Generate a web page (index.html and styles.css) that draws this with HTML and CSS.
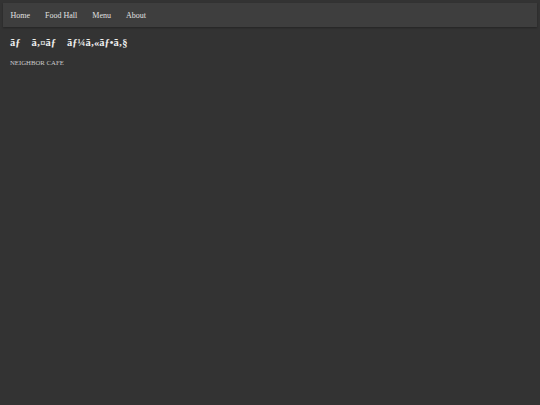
FILE: index.html
```html
<!DOCTYPE html>
<html lang="ja">
<head>
  <meta charset="UTF-8" />
  <meta name="viewport" content="width=device-width, initial-scale=1.0"/>
  <title>Neighbor Cafe</title>
  <link rel="stylesheet" href="styles.css">
</head>
<body>

  <nav class="nav-bar">
    <a href="#" class="nav-link">Home</a>
    <a href="#" class="nav-link">Food Hall</a>
    <a href="#" class="nav-link">Menu</a>
    <a href="#" class="nav-link">About</a>
  </nav>

  <header class="shop-header">
    <h1 class="shop-title">ãƒ<span class="ctrl">&#x8D;</span>ã‚¤ãƒ<span class="ctrl">&#x90;</span>ãƒ¼ã‚«ãƒ•ã‚§</h1>
    <p class="shop-sub">NEIGHBOR CAFE</p>
  </header>

</body>
</html>
```

FILE: styles.css
```css
body {
  margin: 0;
  padding: 3px;
  background-color: #333333;
  color: #dddddd;
  font-family: "Liberation Serif", "Times New Roman", serif;
}

.nav-bar {
  display: flex;
  align-items: center;
  height: 24px;
  background-color: #3e3e3e;
  box-shadow: 0 1px 2px rgba(0, 0, 0, 0.3);
}

.nav-link {
  padding: 0 7.5px;
  font-size: 8px;
  color: #e0e0e0;
  text-decoration: none;
}

.shop-header {
  padding: 9px 7px;
}

.shop-title {
  margin: 0;
  font-size: 10.5px;
  font-weight: bold;
  color: #eeeeee;
}

/* stray control bytes from the broken encoding */
.ctrl {
  display: inline-block;
  width: 11px;
}

.shop-sub {
  margin: 10px 0 0;
  font-size: 6.75px;
  color: #cccccc;
}
```
